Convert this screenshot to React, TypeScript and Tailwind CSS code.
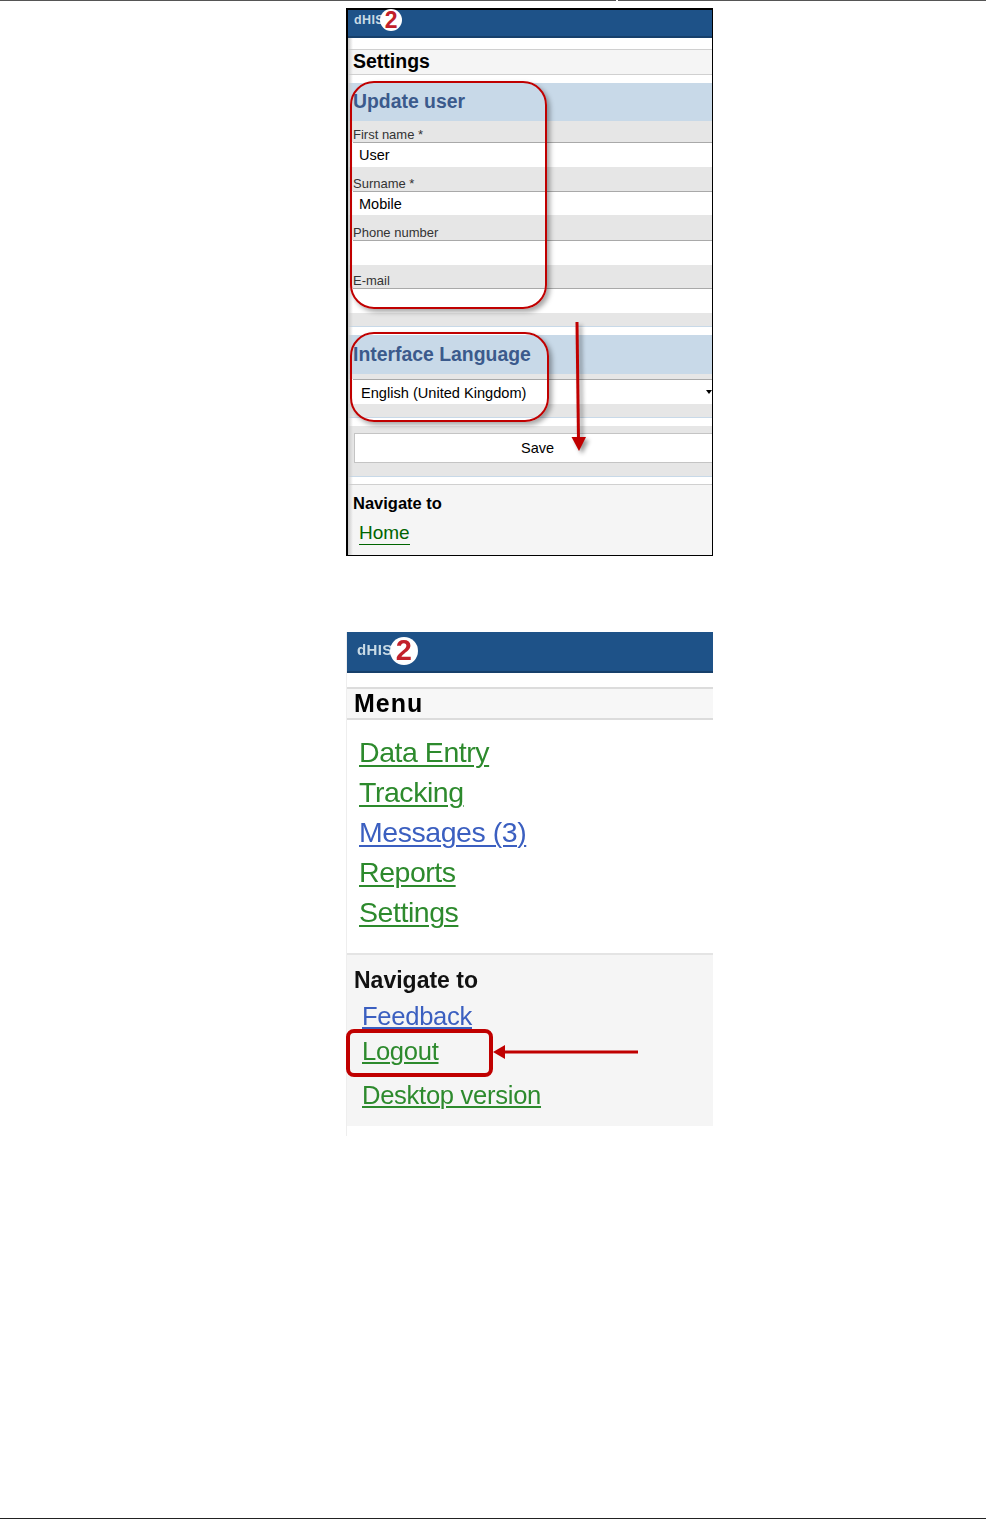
import React from 'react';

function Logo({ large }: { large?: boolean }) {
  return (
    <div className={large ? 'flex items-center pl-[10px] -mt-[2px]' : 'flex items-center pl-[6px] -mt-[6px]'}>
      <span className={large ? 'text-[15px] font-bold tracking-[0.4px] text-[#c9dbe6]' : 'text-[12.5px] font-bold tracking-[0.4px] text-[#c9dbe6]'}>
        dHIS
      </span>
      <span
        className={
          large
            ? 'ml-[-3px] flex h-[28px] w-[28px] items-center justify-center rounded-full bg-white text-[29px] leading-none font-bold text-[#c2202a]'
            : 'ml-[-4px] flex h-[22px] w-[22px] items-center justify-center rounded-full bg-white text-[23px] leading-none font-bold text-[#c2202a]'
        }
      >
        2
      </span>
    </div>
  );
}

function Field({ label, value, top, input }: { label: string; value?: string; top: string; input: string }) {
  return (
    <div>
      <div className={`${top} flex items-end bg-[#e6e6e6] pl-[5px] text-[13px] leading-[15px] text-[#333]`}>{label}</div>
      <div className={`${input} ml-[5px] border-t border-[#a9a9a9] bg-white pl-[6px] text-[14.5px] leading-[24px] text-black`}>
        {value}
      </div>
    </div>
  );
}

function Band({ title, height }: { title: string; height: string }) {
  return (
    <div className={`${height} flex items-center bg-[#c8d9e8] pl-[5px] text-[19.4px] font-bold text-[#3b5a8c]`}>
      {title}
    </div>
  );
}

function SettingsShot() {
  return (
    <div className="relative ml-[346px] mt-[7px] h-[548px] w-[367px] border-t-2 border-l-2 border-r border-b border-black">
      <div className="flex h-[28px] items-center border-b-2 border-[#17406b] bg-[#1e5288]">
        <Logo />
      </div>
      <div className="h-[11px] bg-white" />
      <div className="flex h-[26px] items-center border-y border-[#d0d0d0] bg-[#f5f5f5] pl-[5px] text-[19.5px] font-bold text-black">Settings</div>
      <div className="h-[8px] bg-white" />
      <Band title="Update user" height="h-[38px]" />
      <Field label="First name *" value="User" top="h-[21px]" input="h-[25px]" />
      <Field label="Surname *" value="Mobile" top="h-[24px]" input="h-[24px]" />
      <Field label="Phone number" top="h-[25px]" input="h-[25px]" />
      <Field label="E-mail" top="h-[23px]" input="h-[25px]" />
      <div className="h-[14px] border-b border-[#c8d9e8] bg-[#e6e6e6]" />
      <div className="h-[8px] bg-white" />
      <Band title="Interface Language" height="h-[39px]" />
      <div className="h-[5px] bg-[#e6e6e6]" />
      <div className="relative ml-[5px] flex h-[25px] items-center border-t border-[#a9a9a9] bg-white pl-[8px] pt-[3px] text-[14.6px] text-black">
        English (United Kingdom)
        <span className="absolute right-0 top-[10px] h-0 w-0 border-x-[3px] border-t-[4px] border-x-transparent border-t-black" />
      </div>
      <div className="h-[14px] border-b border-[#c8d9e8] bg-[#e6e6e6]" />
      <div className="h-[8px] bg-white" />
      <div className="h-[7px] bg-[#e6e6e6]" />
      <div className="bg-[#e6e6e6] pl-[6px]">
        <div className="flex h-[30px] items-center justify-center border border-r-0 border-[#c4c4c4] bg-white pl-[8px] pt-[2px] text-[14.5px] text-black">Save</div>
      </div>
      <div className="h-[14px] border-b border-[#c8d9e8] bg-[#e6e6e6]" />
      <div className="h-[7px] bg-white" />
      <div className="h-[71px] border-t border-[#d0d0d0] bg-[#f5f5f5] pl-[5px] pt-[8px]">
        <div className="text-[16.5px] leading-[20px] font-bold text-black">Navigate to</div>
        <a className="mt-[9px] ml-[6px] block w-fit border-b border-[#006400] text-[19px] leading-[22px] text-[#006400]">Home</a>
      </div>
      {/* shadow strip down the left edge of the capture */}
      <div className="absolute left-0 top-[28px] bottom-0 w-[5px] bg-gradient-to-r from-[#c8c8c8] to-transparent" />

      {/* callouts */}
      <div className="absolute left-[2px] top-[71px] h-[228px] w-[197px] rounded-[24px] border-2 border-[#c00000] shadow-[3px_3px_5px_rgba(0,0,0,0.35)]" />
      <div className="absolute left-[2px] top-[322px] h-[90px] w-[199px] rounded-[24px] border-2 border-[#c00000] shadow-[3px_3px_5px_rgba(0,0,0,0.35)]" />
      <svg className="absolute left-[220px] top-[312px] drop-shadow-[3px_3px_2px_rgba(0,0,0,0.4)]" width="20" height="132" viewBox="0 0 20 132">
        <path d="M9 0 L10.5 118" stroke="#c00000" strokeWidth="3" fill="none" />
        <path d="M3.5 115 L18 115 L11 129 Z" fill="#c00000" />
      </svg>
    </div>
  );
}

function MenuLink({ label, color }: { label: string; color: string }) {
  return (
    <a className={`block h-[40px] w-fit text-[28.5px] leading-[40px] tracking-[-0.45px] underline decoration-2 underline-offset-[3px] ${color}`}>{label}</a>
  );
}

function NavLink({ label, color }: { label: string; color: string }) {
  return (
    <a className={`block w-fit text-[25.6px] leading-[30px] tracking-[-0.3px] underline decoration-2 underline-offset-[2px] ${color}`}>{label}</a>
  );
}

function MenuShot() {
  return (
    <div className="relative ml-[346px] mt-[76px] h-[504px] w-[367px] border-l border-[#eeeeee]">
      <div className="h-[494px] blur-[0.6px]">
        <div className="flex h-[41px] items-center border-b-2 border-[#17406b] bg-[#1e5288]">
          <Logo large />
        </div>
        <div className="h-[14px] bg-white" />
        <div className="flex h-[33px] items-center border-y-2 border-[#dcdcdc] bg-[#f7f7f7] pl-[7px] text-[25px] font-bold tracking-[1px] text-black">Menu</div>
        <div className="h-[233px] bg-white pl-[12px] pt-[12px]">
          <MenuLink label="Data Entry" color="text-[#2d8a2d]" />
          <MenuLink label="Tracking" color="text-[#2d8a2d]" />
          <MenuLink label="Messages (3)" color="text-[#3b5fc0]" />
          <MenuLink label="Reports" color="text-[#2d8a2d]" />
          <MenuLink label="Settings" color="text-[#2d8a2d]" />
        </div>
        <div className="h-[173px] border-t-2 border-[#e4e4e4] bg-[#f5f5f5] pl-[7px] pt-[11px]">
          <div className="text-[23px] leading-[28px] font-bold text-[#111]">Navigate to</div>
          <div className="ml-[8px] mt-[7px]">
            <NavLink label="Feedback" color="text-[#3b5fc0]" />
            <div className="h-[5px]" />
            <NavLink label="Logout" color="text-[#2d8a2d]" />
            <div className="h-[14px]" />
            <NavLink label="Desktop version" color="text-[#2d8a2d]" />
          </div>
        </div>
      </div>
      {/* callout around Logout */}
      <div className="absolute -left-px top-[397px] h-[48px] w-[147px] rounded-[8px] border-[4px] border-[#c00000]" />
      <svg className="absolute left-[145px] top-[412px]" width="148" height="16" viewBox="0 0 148 16">
        <path d="M10 8 L146 8" stroke="#c00000" strokeWidth="3" fill="none" />
        <path d="M1 8 L13 1 L13 15 Z" fill="#c00000" />
      </svg>
    </div>
  );
}

export default function App() {
  return (
    <div className="flex h-[1519px] w-[986px] flex-col bg-white font-['Liberation_Sans',Arial,sans-serif]">
      <div className="flex h-px shrink-0">
        <div className="w-[616px] bg-[#555]" />
        <div className="w-[2px]" />
        <div className="flex-1 bg-[#555]" />
      </div>
      <SettingsShot />
      <MenuShot />
      <div className="mt-auto h-px bg-[#222]" />
    </div>
  );
}
